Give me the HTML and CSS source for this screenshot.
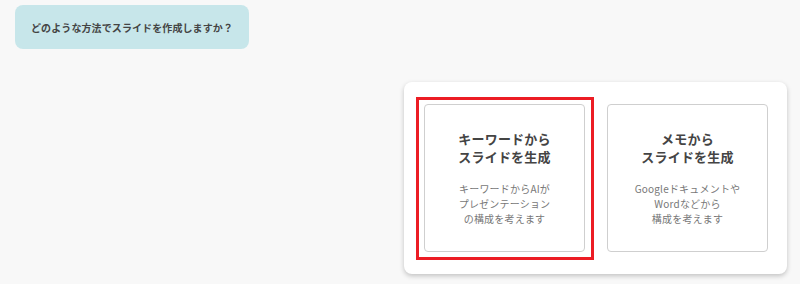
FILE: index.html
```html
<!DOCTYPE html>
<html lang="ja">
<head>
<meta charset="utf-8">
<link rel="stylesheet" href="styles.css">
</head>
<body>
<div class="page">
  <div class="bubble">どのような方法でスライドを作成しますか？</div>
  <div class="row">
    <div class="panel">
      <div class="card-wrap selected">
        <div class="card">
          <div class="title">キーワードから<br>スライドを生成</div>
          <div class="desc">キーワードからAIが<br>プレゼンテーション<br>の構成を考えます</div>
        </div>
      </div>
      <div class="card-wrap">
        <div class="card">
          <div class="title">メモから<br>スライドを生成</div>
          <div class="desc">Googleドキュメントや<br>Wordなどから<br>構成を考えます</div>
        </div>
      </div>
    </div>
  </div>
</div>
</body>
</html>
```
FILE: styles.css
```css
html, body {
  margin: 0;
  padding: 0;
  background: #f8f8f8;
  font-family: "Noto Sans CJK JP", "Noto Sans", sans-serif;
}
.page {
  width: 800px;
  height: 284px;
  padding: 5px 0 0 15px;
  box-sizing: border-box;
}
.bubble {
  display: inline-flex;
  align-items: center;
  justify-content: center;
  width: 234px;
  height: 44px;
  box-sizing: border-box;
  background: #c7e6ea;
  border-radius: 8px;
  font-size: 10px;
  font-weight: 700;
  color: #444;
  letter-spacing: 0.1px;
}
.row {
  display: flex;
  justify-content: flex-end;
  padding-right: 13px;
  margin-top: 33px;
}
.panel {
  display: flex;
  gap: 22px;
  padding: 22px 19px 22px 20px;
  background: #fff;
  border-radius: 8px;
  box-shadow: 0 2px 5px rgba(0,0,0,0.22);
}
.card-wrap {
  position: relative;
}
.card-wrap.selected::after {
  content: "";
  position: absolute;
  top: -7px;
  bottom: -8px;
  left: -8px;
  right: -9px;
  border: 3px solid #ec1c24;
  pointer-events: none;
}
.card {
  width: 161px;
  height: 148px;
  box-sizing: border-box;
  border: 1px solid #cfcfcf;
  border-radius: 4px;
  background: #fff;
  display: flex;
  flex-direction: column;
  align-items: center;
  justify-content: center;
  text-align: center;
}
.title {
  font-size: 13px;
  font-weight: 700;
  line-height: 18px;
  color: #444;
  letter-spacing: 0.2px;
}
.desc {
  margin-top: 15px;
  font-size: 10px;
  line-height: 15px;
  color: #777;
  letter-spacing: 0.2px;
}
```
